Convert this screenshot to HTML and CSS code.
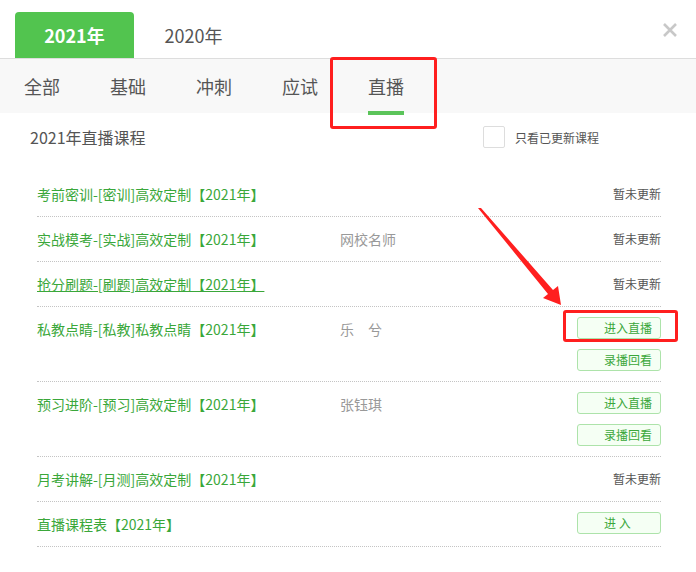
FILE: index.html
```html
<!DOCTYPE html>
<html lang="zh-CN">
<head>
    <meta charset="UTF-8" />
    <meta name="viewport" content="width=device-width, initial-scale=1.0"/>
    <title>直播课程</title>
    <link rel="stylesheet" href="styles.css">
</head>
<body>
    <div class="panel">
        <div class="years">
            <a class="year active" href="#">2021年</a>
            <a class="year" href="#">2020年</a>
            <span class="close">
                <svg width="16" height="16" viewBox="0 0 16 16"><path d="M2 2L14 14M14 2L2 14" stroke="#c8c8c8" stroke-width="2.6"/></svg>
            </span>
        </div>
        <nav class="cats">
            <a href="#">全部</a>
            <a href="#">基础</a>
            <a href="#">冲刺</a>
            <a href="#">应试</a>
            <a href="#" class="on">直播</a>
        </nav>

        <div class="head">
            <div class="head-title">2021年直播课程</div>
            <label class="only-new"><span class="check"></span>只看已更新课程</label>
        </div>

        <ul class="courses">
            <li class="row">
                <a class="name" href="#">考前密训-[密训]高效定制【2021年】</a>
                <span class="teacher"></span>
                <div class="acts"><span class="none">暂未更新</span></div>
            </li>
            <li class="row">
                <a class="name" href="#">实战模考-[实战]高效定制【2021年】</a>
                <span class="teacher">网校名师</span>
                <div class="acts"><span class="none">暂未更新</span></div>
            </li>
            <li class="row">
                <a class="name hover" href="#">抢分刷题-[刷题]高效定制【2021年】</a>
                <span class="teacher"></span>
                <div class="acts"><span class="none">暂未更新</span></div>
            </li>
            <li class="row">
                <a class="name" href="#">私教点睛-[私教]私教点睛【2021年】</a>
                <span class="teacher">乐　兮</span>
                <div class="acts">
                    <a class="btn" href="#">进入直播</a>
                    <a class="btn" href="#">录播回看</a>
                </div>
            </li>
            <li class="row">
                <a class="name" href="#">预习进阶-[预习]高效定制【2021年】</a>
                <span class="teacher">张钰琪</span>
                <div class="acts">
                    <a class="btn" href="#">进入直播</a>
                    <a class="btn" href="#">录播回看</a>
                </div>
            </li>
            <li class="row">
                <a class="name" href="#">月考讲解-[月测]高效定制【2021年】</a>
                <span class="teacher"></span>
                <div class="acts"><span class="none">暂未更新</span></div>
            </li>
            <li class="row">
                <a class="name" href="#">直播课程表【2021年】</a>
                <span class="teacher"></span>
                <div class="acts"><a class="btn" href="#">进&nbsp;入</a></div>
            </li>
        </ul>

        <!-- annotations -->
        <div class="mark mark-tab"></div>
        <div class="mark mark-btn"></div>
        <svg class="arrow" width="696" height="572" viewBox="0 0 696 572">
            <polygon points="478,208 481,208 553,290 558,286 561,305 543,298 548,294" fill="#ff1f1f"/>
        </svg>
    </div>
</body>
</html>
```

FILE: styles.css
```css
body {
    margin: 0;
    background: #fff;
    font-family: "Noto Sans CJK SC", "Noto Sans", sans-serif;
    color: #555;
}

a {
    text-decoration: none;
}

.panel {
    position: relative;
    width: 696px;
    height: 572px;
    overflow: hidden;
}

.years {
    display: flex;
    align-items: flex-end;
    height: 58px;
    padding-left: 15px;
}

.year {
    width: 119px;
    height: 46px;
    line-height: 46px;
    text-align: center;
    font-size: 18px;
    color: #555;
}

.year.active {
    background: #52c44f;
    color: #fff;
    font-weight: bold;
    border-radius: 4px 4px 0 0;
}

.close {
    position: absolute;
    top: 22px;
    right: 18px;
    width: 16px;
    height: 16px;
}

.close svg {
    display: block;
}

.cats {
    display: flex;
    gap: 50px;
    height: 54px;
    padding-left: 24px;
    background: #f8f8f8;
    border-top: 1px solid #ddd;
}

.cats a {
    position: relative;
    line-height: 54px;
    font-size: 18px;
    color: #555;
}

.cats a.on::after {
    content: "";
    position: absolute;
    left: 0;
    right: 0;
    bottom: -2px;
    height: 4px;
    background: #5bc45a;
}

.head {
    display: flex;
    align-items: center;
    height: 48px;
    padding-left: 30px;
}

.head-title {
    width: 453px;
    font-size: 16px;
}

.only-new {
    display: flex;
    align-items: center;
    font-size: 12px;
    color: #555;
}

.check {
    width: 20px;
    height: 20px;
    margin-right: 10px;
    border: 1px solid #ddd;
    border-radius: 2px;
    background: #fff;
}

.courses {
    list-style: none;
    margin: 11px 0 0 37px;
    padding: 0;
    width: 624px;
}

.row {
    display: flex;
    align-items: flex-start;
    padding: 10px 0;
    min-height: 24px;
    border-bottom: 1px dotted #c4c4c4;
}

.name {
    width: 303px;
    line-height: 24px;
    font-size: 14px;
    color: #3aa73a;
}

.name.hover {
    text-decoration: underline;
}

.teacher {
    flex: 1;
    line-height: 24px;
    font-size: 14px;
    color: #999;
}

.acts {
    display: flex;
    flex-direction: column;
    align-items: flex-end;
    gap: 10px;
}

.none {
    line-height: 24px;
    font-size: 12px;
    color: #555;
}

.btn {
    box-sizing: border-box;
    width: 84px;
    height: 22px;
    line-height: 20px;
    padding-left: 26px;
    font-size: 12px;
    color: #3aa73a;
    background: #f5fff4;
    border: 1px solid #ade3aa;
    border-radius: 3px;
}

.mark {
    position: absolute;
    border: 3px solid #ff1f1f;
    border-radius: 3px;
}

.mark-tab {
    left: 330px;
    top: 57px;
    width: 101px;
    height: 66px;
}

.mark-btn {
    left: 563px;
    top: 310px;
    width: 109px;
    height: 26px;
}

.arrow {
    position: absolute;
    left: 0;
    top: 0;
    pointer-events: none;
}
```
